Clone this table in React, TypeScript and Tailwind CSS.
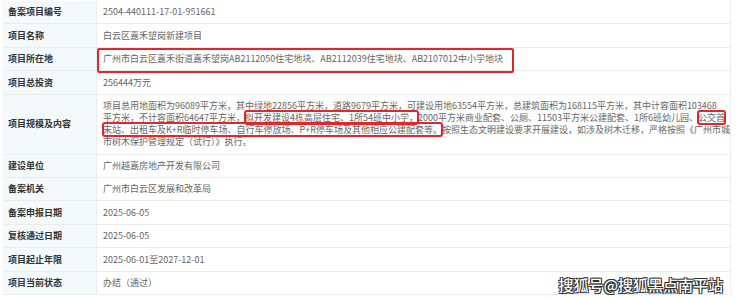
import React from "react";

const rows: { label: string; value: React.ReactNode; tall?: boolean; boxed?: boolean }[] = [
  { label: "备案项目编号", value: "2504-440111-17-01-951661" },
  { label: "项目名称", value: "白云区嘉禾望岗新建项目" },
  {
    label: "项目所在地",
    value: "广州市白云区嘉禾街道嘉禾望岗AB2112050住宅地块、AB2112039住宅地块、AB2107012中小学地块",
    boxed: true,
  },
  { label: "项目总投资", value: "256444万元" },
  { label: "项目规模及内容", value: null, tall: true },
  { label: "建设单位", value: "广州越嘉房地产开发有限公司" },
  { label: "备案机关", value: "广州市白云区发展和改革局" },
  { label: "备案申报日期", value: "2025-06-05" },
  { label: "复核通过日期", value: "2025-06-05" },
  { label: "项目起止年限", value: "2025-06-01至2027-12-01" },
  { label: "项目当前状态", value: "办结（通过）" },
];

const Mark = ({ children }: { children: React.ReactNode }) => (
  <span className="rounded-[2px] outline-2 outline-[#e3262c] -outline-offset-1">{children}</span>
);

function LongText() {
  return (
    <div className="leading-[12px]">
      <div className="whitespace-nowrap">
        项目总用地面积为96089平方米，其中绿地22856平方米，道路9679平方米，可建设用地63554平方米，总建筑面积为168115平方米，其中计容面积103468
      </div>
      <div className="whitespace-nowrap">
        平方米，不计容面积64647平方米，<Mark>拟开发建设4栋高层住宅、1所54班中小学，</Mark>2000平方米商业配套、公厕、11503平方米公建配套、1所6班幼儿园、<Mark>公交首</Mark>
      </div>
      <div className="whitespace-nowrap">
        <Mark>末站、出租车及K+R临时停车场、自行车停放场、P+R停车场及其他相应公建配套等。</Mark>按照生态文明建设要求开展建设，如涉及树木迁移，严格按照《广州市城
      </div>
      <div className="whitespace-nowrap">市树木保护管理规定（试行）》执行。</div>
    </div>
  );
}

export default function App() {
  return (
    <div
      className="relative w-[740px] h-[300px] bg-white overflow-hidden"
      style={{ fontFamily: '"Noto Sans CJK SC", "Noto Sans", sans-serif' }}
    >
      <div className="ml-[3px] mt-[1px] w-[728px] border-r border-[#ececec]">
        {rows.map((r, i) => (
          <div
            key={i}
            className={`flex border-b border-[#ececec] ${r.tall ? "h-[60px]" : "h-[23.4px]"}`}
          >
            <div className="w-[94px] shrink-0 flex items-center pl-[5px] bg-[#f4fafc] border-r border-[#ececec] text-[9px] font-bold text-[#333]">
              {r.label}
            </div>
            <div className="relative flex-1 flex items-center pl-[6px] text-[9px] text-[#666]">
              {r.tall ? <LongText /> : <span className="whitespace-nowrap">{r.value}</span>}
              {r.boxed && (
                <div className="absolute left-0 top-0 w-[417px] h-[25px] border-2 border-[#e3262c] rounded-[2px]" />
              )}
            </div>
          </div>
        ))}
      </div>
      <div className="absolute right-[17px] top-[274px] text-[15px] leading-[22px] text-white font-medium [text-shadow:0_0_1px_#222,1px_1px_0_#333,-1px_-1px_0_#333,1px_-1px_0_#333,-1px_1px_0_#333]">
        搜狐号@搜狐黑点南平站
      </div>
    </div>
  );
}
